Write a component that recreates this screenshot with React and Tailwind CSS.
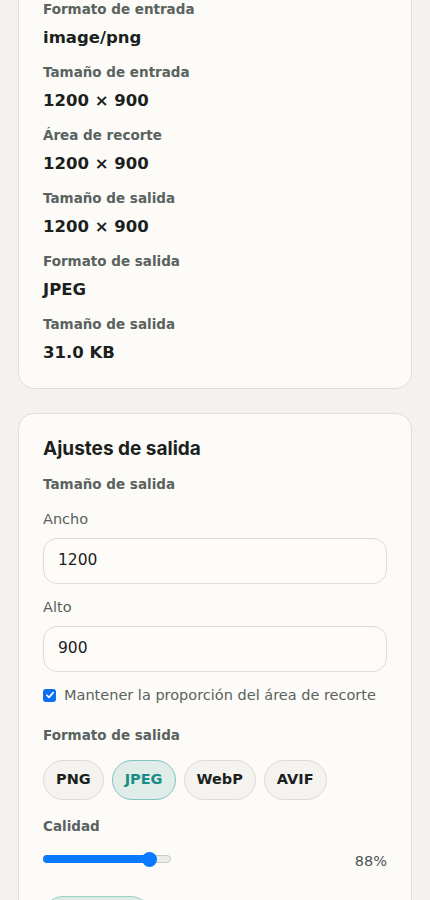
import React from "react";

const info = [
  ["Formato de entrada", "image/png"],
  ["Tamaño de entrada", "1200 × 900"],
  ["Área de recorte", "1200 × 900"],
  ["Tamaño de salida", "1200 × 900"],
  ["Formato de salida", "JPEG"],
  ["Tamaño de salida", "31.0 KB"],
];

const formats = ["PNG", "JPEG", "WebP", "AVIF"];

export default function App() {
  return (
    <div
      className="min-h-[900px] h-[900px] overflow-hidden bg-[#f3f2ee] px-[18px] text-[#1b1f1e]"
      style={{ fontFamily: '"DejaVu Sans", Inter, "Liberation Sans", sans-serif' }}
    >
      <div className="-mt-[26px] rounded-[16px] border border-[#deddd6] bg-[#fcfbf7] px-6 pt-6 pb-[23px]">
        <div className="flex flex-col gap-[12px]">
          {info.map(([label, value], i) => (
            <div key={i} className="flex flex-col gap-[7px]">
              <div className="text-[13.5px] leading-[20px] font-semibold text-[#59625f]">{label}</div>
              <div className="text-[16.5px] leading-[24px] font-bold text-[#1b1f1e]">{value}</div>
            </div>
          ))}
        </div>
      </div>

      <div className="mt-[24px] rounded-[16px] border border-[#deddd6] bg-[#fcfbf7] px-6 pt-[24px] pb-6">
        <h2 className="font-['Inter',sans-serif] text-[19px] leading-[22px] font-bold text-[#1b1f1e]">Ajustes de salida</h2>
        <div className="mt-[14px] text-[13.5px] leading-[20px] font-semibold text-[#59625f]">Tamaño de salida</div>

        <label className="mt-[14px] block text-[14.5px] leading-[22px] text-[#59625f]">Ancho</label>
        <div className="mt-[8px] flex h-[46px] items-center rounded-[14px] border border-[#dedcd6] bg-[#fdfcf8] px-[14px] text-[15.5px] text-[#1b1f1e]">
          1200
        </div>

        <label className="mt-[12px] block text-[14.5px] leading-[22px] text-[#59625f]">Alto</label>
        <div className="mt-[8px] flex h-[46px] items-center rounded-[14px] border border-[#dedcd6] bg-[#fdfcf8] px-[14px] text-[15.5px] text-[#1b1f1e]">
          900
        </div>

        <label className="mt-[13px] flex items-center gap-[8px] text-[14.5px] leading-[20px] text-[#59625f]">
          <span className="flex h-[13px] w-[13px] shrink-0 items-center justify-center rounded-[3px] bg-[#0b6ef5]">
            <svg viewBox="0 0 12 12" className="h-[10px] w-[10px]">
              <path d="M2.2 6.3 L4.8 8.8 L9.8 3.2" fill="none" stroke="white" strokeWidth="2" strokeLinecap="round" strokeLinejoin="round" />
            </svg>
          </span>
          Mantener la proporción del área de recorte
        </label>

        <div className="mt-[20px] text-[13.5px] leading-[20px] font-semibold text-[#59625f]">Formato de salida</div>
        <div className="mt-[15px] flex gap-[8px]">
          {formats.map((f) => {
            const active = f === "JPEG";
            return (
              <button
                key={f}
                className={
                  active
                    ? "h-[40px] rounded-full border border-[#80c6bf] bg-[#e0ece7] px-[12px] text-[14.5px] font-bold text-[#1a8c86]"
                    : "h-[40px] rounded-full border border-[#dcdbd5] bg-[#f4f3ef] px-[12px] text-[14.5px] font-bold text-[#1b1f1e]"
                }
              >
                {f}
              </button>
            );
          })}
        </div>

        <div className="mt-[16px] text-[13.5px] leading-[20px] font-semibold text-[#59625f]">Calidad</div>
        <div className="mt-[10px] flex items-center justify-between">
          <div className="relative h-[16px] w-[128px]">
            <div className="absolute left-0 right-0 top-[4px] h-[8px] rounded-full border border-[#c9c9c5] bg-[#ebebe8]" />
            <div className="absolute left-0 top-[4px] h-[8px] w-[108px] rounded-full bg-[#0a79ff]" />
            <div className="absolute left-[99px] top-[0.5px] h-[15px] w-[15px] rounded-full bg-[#0a79ff]" />
          </div>
          <div className="mt-[5px] text-[14.5px] text-[#4d5452]">88%</div>
        </div>

        <button className="mt-[23px] h-[40px] w-[108px] rounded-full border border-[#9ccfc6] bg-[#dcebe5] text-[15px] font-bold text-[#1a8c86]">
          Descargar
        </button>
      </div>
    </div>
  );
}
